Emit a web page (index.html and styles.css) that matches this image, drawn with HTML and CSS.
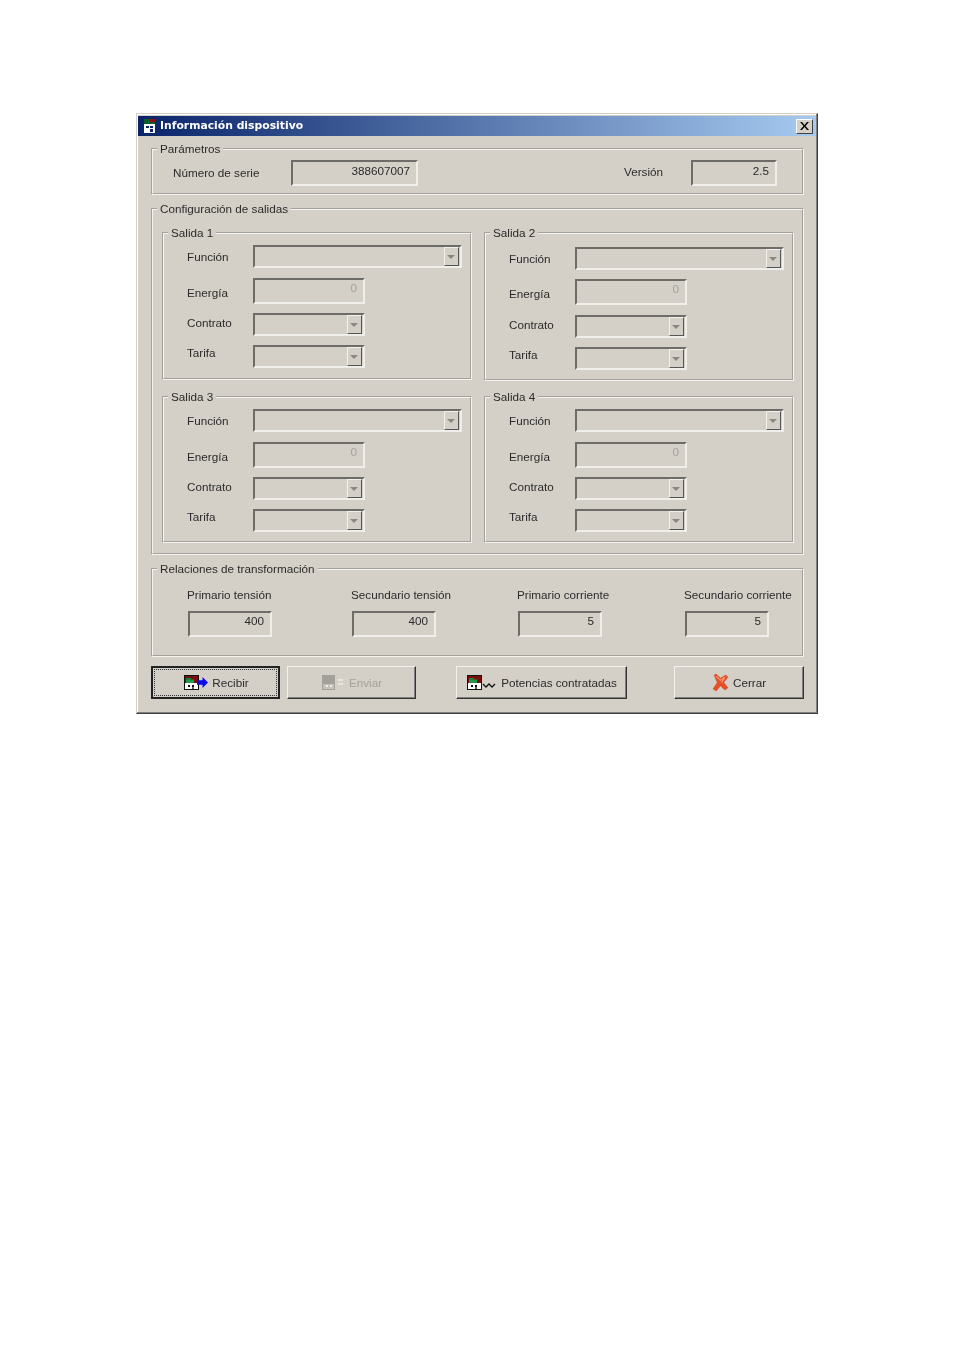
FILE: index.html
```html
<!DOCTYPE html>
<html lang="es">
<head>
    <meta charset="UTF-8">
    <meta name="viewport" content="width=device-width, initial-scale=1.0">
    <title>Información dispositivo</title>
    <link rel="stylesheet" href="styles.css">
</head>
<body>
    <svg class="defs" width="0" height="0">
        <symbol id="app-icon" viewBox="0 0 15 15">
            <rect x="0.5" y="0.5" width="14" height="14" fill="#fff" stroke="#111"/>
            <rect x="1" y="1" width="13" height="7" fill="#7a0c0c"/>
            <rect x="2" y="3" width="5" height="1.5" fill="#0a8a3a"/>
            <rect x="2" y="4.5" width="8" height="3.5" fill="#1f9a4a"/>
            <rect x="4" y="10" width="2" height="2" fill="#111"/>
            <rect x="8" y="10" width="2" height="2" fill="#111"/>
            <rect x="8" y="12.4" width="2" height="1.3" fill="#111"/>
        </symbol>
    </svg>

    <div class="window">
        <div class="titlebar">
            <svg class="title-icon" viewBox="0 0 11 14" width="11" height="14">
                <rect x="0" y="0" width="11" height="14" fill="#fff"/>
                <rect x="0" y="0" width="11" height="5" fill="#0b5a2c"/>
                <rect x="6" y="0" width="5" height="3" fill="#8c1010"/>
                <rect x="2" y="7" width="3" height="2" fill="#0a246a"/>
                <rect x="6" y="7" width="3" height="2" fill="#0a246a"/>
                <rect x="6" y="10" width="3" height="3" fill="#0a246a"/>
            </svg>
            <span class="title-text">Información dispositivo</span>
            <span class="close-btn">
                <svg viewBox="0 0 9 8" width="9" height="8"><path d="M0 0h2l2.5 3L7 0h2L5.5 4 9 8H7L4.500 5 2 8H0l3.500-4z" fill="#000"/></svg>
            </span>
        </div>

        <fieldset class="group params">
            <legend>Parámetros</legend>
            <div class="params-row">
                <span class="params-label">Número de serie</span>
                <div class="edit serial">388607007</div>
                <span class="version-label">Versión</span>
                <div class="edit version">2.5</div>
            </div>
        </fieldset>

        <fieldset class="group outputs">
            <legend>Configuración de salidas</legend>
            <div class="outputs-grid">
                <fieldset class="group salida">
                    <legend>Salida 1</legend>
                    <div class="row"><span class="lbl lbl-function">Función</span><div class="combo wide"><span class="arrow"></span></div></div>
                    <div class="row gap-10"><span class="lbl lbl-energy">Energía</span><div class="edit energy">0</div></div>
                    <div class="row gap-9"><span class="lbl lbl-contract">Contrato</span><div class="combo"><span class="arrow"></span></div></div>
                    <div class="row gap-9"><span class="lbl lbl-tariff">Tarifa</span><div class="combo"><span class="arrow"></span></div></div>
                </fieldset>
                <fieldset class="group salida lower">
                    <legend>Salida 2</legend>
                    <div class="row"><span class="lbl lbl-function">Función</span><div class="combo wide"><span class="arrow"></span></div></div>
                    <div class="row gap-9"><span class="lbl lbl-energy">Energía</span><div class="edit energy">0</div></div>
                    <div class="row gap-10"><span class="lbl lbl-contract">Contrato</span><div class="combo"><span class="arrow"></span></div></div>
                    <div class="row gap-9"><span class="lbl lbl-tariff">Tarifa</span><div class="combo"><span class="arrow"></span></div></div>
                </fieldset>
                <fieldset class="group salida bottom">
                    <legend>Salida 3</legend>
                    <div class="row"><span class="lbl lbl-function">Función</span><div class="combo wide"><span class="arrow"></span></div></div>
                    <div class="row gap-10"><span class="lbl lbl-energy">Energía</span><div class="edit energy">0</div></div>
                    <div class="row gap-9"><span class="lbl lbl-contract">Contrato</span><div class="combo"><span class="arrow"></span></div></div>
                    <div class="row gap-9"><span class="lbl lbl-tariff">Tarifa</span><div class="combo"><span class="arrow"></span></div></div>
                </fieldset>
                <fieldset class="group salida bottom">
                    <legend>Salida 4</legend>
                    <div class="row"><span class="lbl lbl-function">Función</span><div class="combo wide"><span class="arrow"></span></div></div>
                    <div class="row gap-10"><span class="lbl lbl-energy">Energía</span><div class="edit energy">0</div></div>
                    <div class="row gap-9"><span class="lbl lbl-contract">Contrato</span><div class="combo"><span class="arrow"></span></div></div>
                    <div class="row gap-9"><span class="lbl lbl-tariff">Tarifa</span><div class="combo"><span class="arrow"></span></div></div>
                </fieldset>
            </div>
        </fieldset>

        <fieldset class="group ratios">
            <legend>Relaciones de transformación</legend>
            <div class="ratios-grid">
                <div><div class="ratio-label">Primario tensión</div><div class="edit ratio">400</div></div>
                <div><div class="ratio-label">Secundario tensión</div><div class="edit ratio">400</div></div>
                <div><div class="ratio-label">Primario corriente</div><div class="edit ratio">5</div></div>
                <div><div class="ratio-label">Secundario corriente</div><div class="edit ratio">5</div></div>
            </div>
        </fieldset>

        <div class="buttons">
            <button class="btn btn-default btn-receive">
                <span class="focus-ring">
                    <svg class="btn-icon" width="15" height="15"><use href="#app-icon"/></svg>
                    <svg class="arrow-icon" viewBox="0 0 10 10" width="11" height="11"><path d="M0 3h5V0l5 5-5 5V7H0z" fill="#0a0ae6"/></svg>
                    <span class="btn-text">Recibir</span>
                </span>
            </button>
            <button class="btn btn-send">
                <svg class="send-icon" viewBox="0 0 13 15" width="13" height="15">
                    <rect width="13" height="15" fill="#a3a09a"/>
                    <rect x="1" y="9" width="11" height="5" fill="#c4c1ba"/>
                    <rect x="4" y="10" width="2" height="2" fill="#eeece8"/>
                    <rect x="8" y="10" width="2" height="2" fill="#eeece8"/>
                </svg>
                <svg class="send-arrow" viewBox="0 0 6 7" width="6" height="7"><path d="M0 1h5M0 5h5" stroke="#efede8" stroke-width="1.500"/></svg>
                <span class="btn-text send-text">Enviar</span>
            </button>
            <button class="btn btn-power">
                <svg class="btn-icon" width="15" height="15"><use href="#app-icon"/></svg>
                <svg class="wave-icon" viewBox="0 0 14 7" width="14" height="7"><path d="M1 2l3 3 3-3 3 3 3-3" fill="none" stroke="#111" stroke-width="1.300"/></svg>
                <span class="btn-text power-text">Potencias contratadas</span>
            </button>
            <button class="btn btn-close">
                <svg class="x-icon" viewBox="0 0 16 16" width="17" height="17">
                    <path d="M2 1l2-1 4 4 5-3 2 2-4 5 4 5-3 2-4-4-4 5-3-2 4-6z" fill="#e8502a" stroke="#c9401d" stroke-width="0.500"/>
                    <path d="M4 2l4 4 4-3-3 5" fill="none" stroke="#f6a27e"/>
                </svg>
                <span class="btn-text">Cerrar</span>
            </button>
        </div>
    </div>
</body>
</html>
```

FILE: styles.css
```css
* {
    box-sizing: border-box;
}
body {
    margin: 0;
    padding: 113px 0 0 136px;
    background-color: #fff;
    font-family: "Liberation Sans", Arial, sans-serif;
    font-size: 11.700px;
    color: #2b2b2b;
}
.defs {
    position: absolute;
}
.window {
    width: 682px;
    padding: 2px 1px 14px 1px;
    background-color: #d4d0c8;
    border: 1px solid;
    border-color: #d4d0c8 #404040 #404040 #d4d0c8;
    box-shadow: inset -1px -1px 0 #808080, inset 1px 1px 0 #fff;
    filter: blur(0.4px);
}
.titlebar {
    display: flex;
    align-items: center;
    height: 20px;
    margin: 0 0 6px 0;
    padding: 0 3px 0 6px;
    background: linear-gradient(to right, #0a246a, #a6caf0);
    color: #fff;
}
.title-icon {
    margin-right: 5px;
}
.title-text {
    flex: 1;
    margin-top: -2px;
    font-family: "DejaVu Sans", Verdana, sans-serif;
    font-weight: bold;
    font-size: 10.800px;
}
.close-btn {
    display: flex;
    align-items: center;
    justify-content: center;
    width: 17px;
    height: 15px;
    background-color: #d4d0c8;
    border: 1px solid;
    border-color: #fff #404040 #404040 #fff;
}

/* group boxes */
.group {
    margin: 0;
    padding: 0;
    min-width: 0;
    border: 2px groove #f6f4f0;
}
.group legend {
    margin-left: 4px;
    padding: 0 3px;
    line-height: 14px;
    white-space: nowrap;
}
.params,
.outputs,
.ratios {
    width: 653px;
    margin-left: 13px;
}
.params-row {
    display: flex;
    align-items: center;
    padding: 4px 25px 7px 20px;
}
.params-label {
    width: 118px;
    margin-top: -2px;
}
.version-label {
    margin-left: auto;
    width: 67px;
    margin-top: -4px;
}
.outputs {
    margin-top: 7px;
}
.outputs-grid {
    display: grid;
    grid-template-columns: 310px 310px;
    column-gap: 12px;
    row-gap: 9px;
    align-items: start;
    padding: 10px 8px 10px 9px;
}
.salida {
    padding: 5px 8px 10px 0;
}
.salida.lower {
    padding: 7px 8px 9px 0;
}
.salida.bottom {
    padding-bottom: 9px;
}
.row {
    display: flex;
    align-items: center;
    margin-left: 23px;
}
.gap-9 {
    margin-top: 9px;
}
.gap-10 {
    margin-top: 10px;
}
.lbl {
    width: 66px;
}
.lbl-energy {
    margin-top: 3px;
}
.lbl-contract {
    margin-top: -4px;
}
.lbl-tariff {
    margin-top: -9px;
}

/* sunken controls */
.edit,
.combo {
    background-color: #d4d0c8;
    border: 2px solid;
    border-color: #6e6c68 #f0eeea #f0eeea #6e6c68;
}
.edit {
    height: 26px;
    padding: 0 6px 0 0;
    line-height: 15px;
    text-align: right;
}
.serial {
    width: 127px;
    padding-top: 1px;
}
.version {
    width: 86px;
    padding-top: 1px;
}
.energy {
    width: 112px;
    color: #a5a29c;
}
.ratio {
    width: 84px;
    margin: 9px 0 0 1px;
}
.combo {
    display: flex;
    justify-content: flex-end;
    width: 112px;
    height: 23px;
    padding: 0 1px 0 0;
}
.combo.wide {
    width: 209px;
}
.arrow {
    position: relative;
    width: 15px;
    height: 19px;
    background-color: #d4d0c8;
    border: 1px solid;
    border-color: #f4f2ee #555 #555 #f4f2ee;
}
.arrow::after {
    content: "";
    position: absolute;
    left: 2px;
    top: 7px;
    border-style: solid;
    border-width: 4px 4px 0 4px;
    border-color: #8a8884 transparent transparent transparent;
}

/* transformation ratios */
.ratios {
    margin-top: 7px;
}
.ratios-grid {
    display: grid;
    grid-template-columns: 164px 166px 167px auto;
    padding: 12px 0 18px 34px;
}
.ratio-label {
    line-height: 14px;
    white-space: nowrap;
}

/* bottom buttons */
.buttons {
    display: flex;
    margin: 9px 0 0 13px;
}
.btn {
    display: flex;
    align-items: center;
    justify-content: center;
    height: 33px;
    padding: 0;
    font-family: inherit;
    font-size: 11.700px;
    color: #2b2b2b;
    background-color: #d4d0c8;
    border: 1px solid;
    border-color: #f4f2ee #333 #333 #f4f2ee;
    box-shadow: inset -1px -1px 0 #808080;
}
.btn-default {
    border: 2px solid #222;
    box-shadow: none;
}
.focus-ring {
    display: flex;
    align-items: center;
    justify-content: center;
    width: 123px;
    height: 27px;
    padding-left: 2px;
    border: 1px dotted #333;
}
.btn-receive {
    width: 129px;
}
.btn-send {
    width: 129px;
    margin-left: 7px;
    color: #a5a29c;
}
.btn-power {
    width: 171px;
    margin-left: 40px;
    padding-left: 1px;
}
.btn-close {
    width: 130px;
    margin-left: 47px;
}
.btn-text {
    margin-left: 4px;
}
.send-icon {
    margin-left: 1px;
}
.send-arrow {
    margin-left: 3px;
}
.send-text {
    margin-left: 5px;
}
.power-text {
    margin-left: 5px;
}
.arrow-icon {
    margin-left: -2px;
}
.wave-icon {
    margin: 5px 0 0 0;
}
```
